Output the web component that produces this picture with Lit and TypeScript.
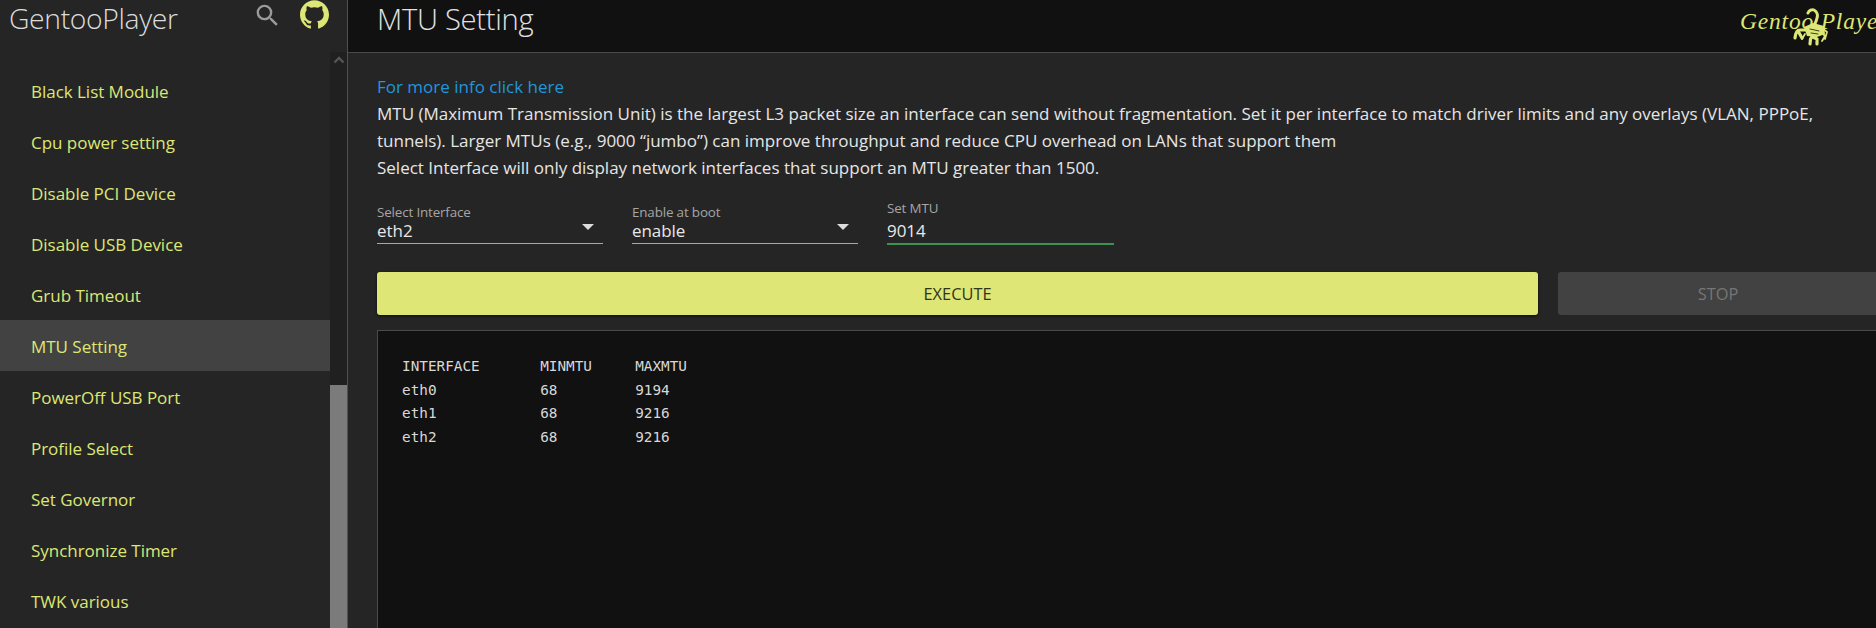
import { LitElement, html, css } from "lit";
import { customElement } from "lit/decorators.js";

const NAV = ["Black List Module","Cpu power setting","Disable PCI Device","Disable USB Device","Grub Timeout","MTU Setting","PowerOff USB Port","Profile Select","Set Governor","Synchronize Timer","TWK various"];
const OUTPUT = `INTERFACE       MINMTU     MAXMTU
eth0            68         9194
eth1            68         9216
eth2            68         9216`;

@customElement("app-root")
export class AppRoot extends LitElement {
  static styles = css`
    :host { display:flex; width:1876px; height:628px; overflow:hidden; background:#252525; color:#e4e4e4; font-family:"Open Sans","Noto Sans",sans-serif; }
    .side { width:347px; flex:none; display:flex; flex-direction:column; border-right:1px solid #505050; background:#252525; }
    .brand { height:52px; flex:none; display:flex; align-items:flex-start; padding:0 0 0 9px; box-sizing:border-box; position:relative; }
    .brand-name { font-size:28.3px; font-weight:300; line-height:36px; color:#dcdcdc; flex:1; letter-spacing:-.35px; }
    .search { width:29px; height:29px; margin:1px 18px 0 0; fill:#9a9a9a; }
    .gh { width:29px; height:29px; margin:0 18px 0 0; fill:#dce775; }
    .side-body { flex:1; display:flex; min-height:0; }
    .nav { flex:1; padding-top:13px; overflow:hidden; }
    .nav-item { height:51px; box-sizing:border-box; padding-top:1px; display:flex; align-items:center; padding-left:31px; font-size:17px; color:#dce775; letter-spacing:-.03px; }
    .nav-item.active { background:#424242; }
    .bar { width:17px; flex:none; background:#202020; display:flex; flex-direction:column; align-items:center; }
    .chev { width:12px; height:8px; margin-top:4px; fill:none; stroke:#555; stroke-width:2.4; }
    .thumb { align-self:stretch; flex:1; margin-top:321px; background:#7b7b7b; }
    .main { flex:1; min-width:0; display:flex; flex-direction:column; }
    .top { height:53px; flex:none; box-sizing:border-box; background:#111; border-bottom:1px solid #4a4a4a; display:flex; padding-left:29px; }
    .title { font-size:29.2px; font-weight:300; line-height:38px; color:#e2e2e2; flex:1; letter-spacing:-.3px; }
    .logo { width:136px; flex:none; position:relative; overflow:hidden; font-family:"Liberation Serif",serif; font-style:italic; font-size:23.5px; line-height:51px; color:#dce775; white-space:nowrap; }
    .logo span { display:block; margin-top:-4px; letter-spacing:.8px; }
    .scorp { position:absolute; left:53px; top:8px; width:36px; height:38px; }
    .body { padding:20px 0 0 29px; flex:1; min-height:0; display:flex; flex-direction:column; }
    .info { font-size:17px; line-height:27px; width:1462px; color:#e6e6e6; }
    .info a { color:#2196dd; text-decoration:none; display:block; }
    .fields { display:flex; gap:29px; margin-top:17px; height:74px; box-sizing:border-box; }
    .field { width:226px; height:45px; border-bottom:1px solid #a8a8a8; display:flex; flex-direction:column; position:relative; box-sizing:content-box; }
    .field.on { width:227px; border-bottom:2px solid #3f9150; }
    .lab { font-size:13.4px; line-height:16px; color:#a6a6a6; margin-top:6px; letter-spacing:-.15px; }
    .on .lab { margin-top:2px; }
    .val { font-size:17px; line-height:21px; color:#e8e8e8; letter-spacing:-.05px; }
    .on .val { margin-top:4px; }
    .caret { position:absolute; right:9px; top:26px; width:0; height:0; border-left:6.5px solid transparent; border-right:6.5px solid transparent; border-top:6px solid #ddd; }
    .btns { display:flex; gap:20px; }
    .btn { height:43px; display:flex; align-items:center; justify-content:center; border-radius:3px; font-size:16.4px; flex:none; box-sizing:border-box; }
    .exec { width:1161px; background:#dee675; color:#33351a; box-shadow:0 1px 3px rgba(0,0,0,.7); }
    .stop { width:320px; background:#424242; color:#767676; }
    .term { margin-top:15px; flex:1; background:#111; border-top:1px solid #4a4a4a; border-left:1px solid #4a4a4a; padding:24px 0 0 24px; margin-right:-40px; }
    pre { margin:0; font-family:"DejaVu Sans Mono",monospace; font-size:14.35px; line-height:23.6px; color:#d8d8d8; }
  `;
  render() {
    return html`
      <div class="side">
        <div class="brand">
          <div class="brand-name">GentooPlayer</div>
          <svg class="search" viewBox="0 0 24 24"><path d="M15.5 14h-.79l-.28-.27A6.47 6.47 0 0 0 16 9.5 6.5 6.5 0 1 0 9.5 16c1.61 0 3.09-.59 4.23-1.57l.27.28v.79l5 4.99L20.49 19l-4.99-5zm-6 0C7.01 14 5 11.99 5 9.5S7.01 5 9.5 5 14 7.01 14 9.5 11.99 14 9.5 14z"/></svg>
          <svg class="gh" viewBox="0 0 24 24"><path d="M12 .297c-6.63 0-12 5.373-12 12 0 5.303 3.438 9.8 8.205 11.385.6.113.82-.258.82-.577 0-.285-.01-1.04-.015-2.04-3.338.724-4.042-1.61-4.042-1.61C4.422 18.07 3.633 17.7 3.633 17.7c-1.087-.744.084-.729.084-.729 1.205.084 1.838 1.236 1.838 1.236 1.07 1.835 2.809 1.305 3.495.998.108-.776.417-1.305.76-1.605-2.665-.3-5.466-1.332-5.466-5.93 0-1.31.465-2.38 1.235-3.22-.135-.303-.54-1.523.105-3.176 0 0 1.005-.322 3.3 1.23.96-.267 1.98-.399 3-.405 1.02.006 2.04.138 3 .405 2.28-1.552 3.285-1.23 3.285-1.23.645 1.653.24 2.873.12 3.176.765.84 1.23 1.91 1.23 3.22 0 4.61-2.805 5.625-5.475 5.92.42.36.81 1.096.81 2.22 0 1.606-.015 2.896-.015 3.286 0 .315.21.69.825.57C20.565 22.092 24 17.592 24 12.297c0-6.627-5.373-12-12-12"/></svg>
        </div>
        <div class="side-body">
          <div class="nav">${NAV.map(n => html`<div class="nav-item ${n === "MTU Setting" ? "active" : ""}">${n}</div>`)}</div>
          <div class="bar">
            <svg class="chev" viewBox="0 0 12 8"><path d="M1.5 6.5 6 2l4.500 4.500"/></svg>
            <div class="thumb"></div>
          </div>
        </div>
      </div>
      <div class="main">
        <div class="top">
          <div class="title">MTU Setting</div>
          <div class="logo"><span>Gentoo Player</span>
            <svg class="scorp" viewBox="0 0 36 38" fill="#dce775" stroke="#dce775" stroke-linecap="round" stroke-linejoin="round">
              <path d="M15 5C16 2.500 19 1 21 2 24 3.500 25 7 24 10 23.500 13 22 15 21 18" fill="none" stroke-width="3"/>
              <path d="M11 19 20 15 31 18 32 26 24 29 14 28Z" stroke="none"/>
              <path d="M14 22H7C4 22 2.500 25 2 30M5 23 9 30" fill="none" stroke-width="3.200"/>
              <path d="M20 27 17.500 31 17 36M20 29 24 31 24 36" fill="none" stroke-width="3.200"/>
              <path d="M29 20 34 24 32 31M28 24 32 28 29 33M12 26 9 31" fill="none" stroke-width="1.800"/>
              <path d="M17 21 26 23M18 25 25 26" fill="none" stroke="#111" stroke-width=".8"/>
            </svg>
          </div>
        </div>
        <div class="body">
          <div class="info">
            <a href="#">For more info click here</a>
            MTU (Maximum Transmission Unit) is the largest L3 packet size an interface can send without fragmentation. Set it per interface to match driver limits and any overlays (VLAN, PPPoE, tunnels). Larger MTUs (e.g., 9000 “jumbo”) can improve throughput and reduce CPU overhead on LANs that support them<br>
            Select Interface will only display network interfaces that support an MTU greater than 1500.
          </div>
          <div class="fields">
            <div class="field"><div class="lab">Select Interface</div><div class="val">eth2</div><div class="caret"></div></div>
            <div class="field"><div class="lab">Enable at boot</div><div class="val">enable</div><div class="caret"></div></div>
            <div class="field on"><div class="lab">Set MTU</div><div class="val">9014</div></div>
          </div>
          <div class="btns">
            <div class="btn exec">EXECUTE</div>
            <div class="btn stop">STOP</div>
          </div>
          <div class="term"><pre>${OUTPUT}</pre></div>
        </div>
      </div>
    `;
  }
}
